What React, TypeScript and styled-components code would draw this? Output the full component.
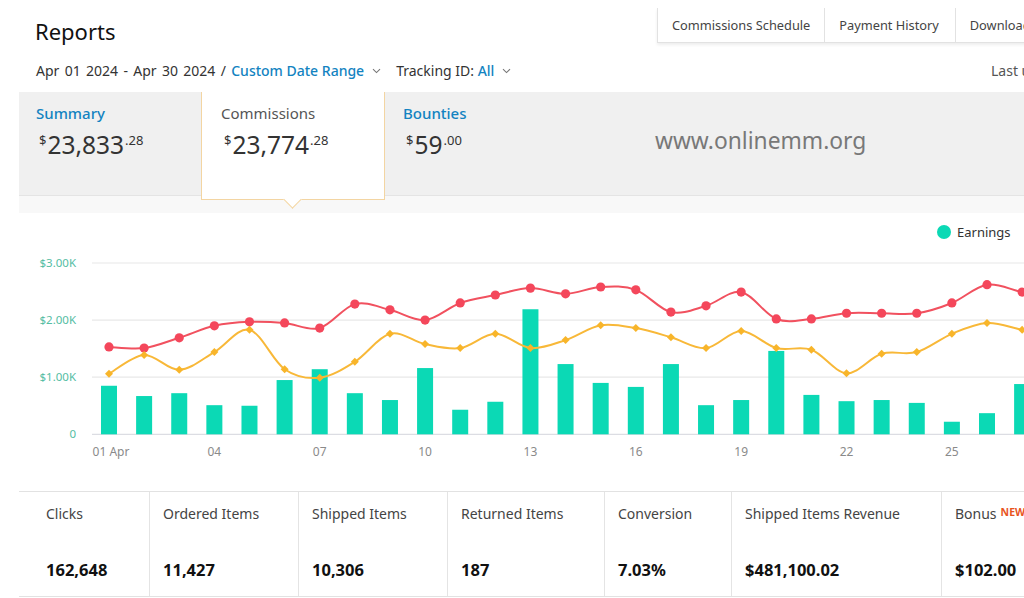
import React from 'react'
import styled, { createGlobalStyle } from 'styled-components'

const GlobalStyle = createGlobalStyle`
  html, body {
    margin: 0;
    padding: 0;
    background: #fff;
    overflow: hidden;
  }
  body {
    width: 1024px;
    height: 598px;
    font-family: 'Noto Sans', 'Open Sans', Arial, sans-serif;
    color: #111;
  }
`

const LINK = '#1383c1'

const Page = styled.div`
  width: 1100px;
  margin-left: 19px;
`

const Header = styled.div`
  display: grid;
  grid-template-columns: 1fr 462px;
  height: 50px;
`

const Title = styled.h1`
  margin: 0;
  padding: 16px 0 0 16px;
  font-size: 22px;
  line-height: 30px;
  font-weight: 400;
  color: #111;
`

const TopTabs = styled.div`
  display: flex;
  margin-top: 8px;
  height: 34px;
  border: 1px solid #e2e2e2;
  border-top: none;
  box-shadow: 0 2px 3px rgba(0, 0, 0, 0.07);
`

const TopTab = styled.div<{ $w: number }>`
  width: ${p => p.$w}px;
  box-sizing: border-box;
  padding: 0 14px;
  display: flex;
  align-items: center;
  font-size: 12.8px;
  color: #444;
  white-space: nowrap;
  & + & {
    border-left: 1px solid #e2e2e2;
  }
`

const DateRow = styled.div`
  display: grid;
  grid-template-columns: 1fr 128px;
  height: 24px;
  margin: 9px 0 9px;
  line-height: 24px;
  font-size: 14px;
`

const DateText = styled.div`
  padding-left: 17px;
  color: #333;
  display: flex;
  align-items: center;
  white-space: nowrap;
`

const Range = styled.span`
  word-spacing: 1.7px;
`

const Link = styled.span`
  color: ${LINK};
  font-weight: 500;
  word-spacing: 0;
`

const Filter = styled.span`
  display: inline-flex;
  align-items: center;
  gap: 8px;
  margin-right: 15px;
`

const Updated = styled.div`
  color: #555;
  white-space: nowrap;
`

const Panel = styled.div`
  position: relative;
  display: flex;
  height: 103px;
  background: #f0f0f0;
  border-bottom: 1px solid #e4e4e4;
`

const Tab = styled.div<{ $w: number; $pad: number }>`
  width: ${p => p.$w}px;
  box-sizing: border-box;
  padding: 11px 0 0 ${p => p.$pad}px;
`

const ActiveTab = styled(Tab)`
  position: relative;
  z-index: 1;
  align-self: flex-start;
  height: 108px;
  background: #fff;
  border: 1px solid #f3d5a2;
  border-top: none;
  &::after {
    content: '';
    position: absolute;
    left: 50%;
    bottom: -7px;
    width: 12px;
    height: 12px;
    margin-left: -7px;
    background: #fff;
    border-right: 1px solid #f3d5a2;
    border-bottom: 1px solid #f3d5a2;
    transform: rotate(45deg);
  }
`

const TabLabel = styled.div<{ $color: string }>`
  font-size: 15px;
  line-height: 20px;
  color: ${p => p.$color};
  font-weight: ${p => (p.$color === LINK ? 500 : 400)};
`

const Amount = styled.div`
  display: inline-flex;
  align-items: flex-start;
  margin-top: 7px;
  padding-left: 3px;
  color: #333;
`

const Small = styled.span`
  font-size: 13px;
  line-height: 20px;
`

const Big = styled.span`
  font-size: 24.5px;
  line-height: 30px;
  margin: 0 1px;
`

const Watermark = styled.div`
  position: absolute;
  left: 636px;
  top: 33px;
  font-size: 22.8px;
  color: #787878;
`

const Strip = styled.div`
  height: 17px;
  background: #f8f8f8;
`

const Legend = styled.div`
  height: 38px;
  display: flex;
  align-items: center;
  gap: 6px;
  padding-left: 918px;
  font-size: 13px;
  color: #333;
`

const LegendDot = styled.span`
  width: 14px;
  height: 14px;
  border-radius: 50%;
  background: #0bd9b5;
`

const ChartSvg = styled.svg`
  display: block;
`

const Stats = styled.div`
  display: grid;
  grid-template-columns: 130px 149px 149px 157px 127px 210px 1fr;
  height: 104px;
  margin-top: 20px;
  border-top: 1px solid #e2e2e2;
  border-bottom: 1px solid #e2e2e2;
`

const Stat = styled.div`
  padding: 12px 10px 0 13px;
  & + & {
    border-left: 1px solid #e4e4e4;
  }
  &:first-child {
    padding-left: 27px;
  }
`

const StatLabel = styled.div`
  font-size: 14px;
  line-height: 20px;
  color: #444;
  white-space: nowrap;
`

const StatValue = styled.div`
  margin-top: 36px;
  font-size: 16.5px;
  line-height: 20px;
  font-weight: 700;
  color: #111;
`

const New = styled.span`
  margin-left: 4px;
  font-size: 10.5px;
  line-height: 10px;
  font-weight: 700;
  color: #e8541e;
  vertical-align: 3px;
`

const Chevron = () => (
  <svg width="9" height="6" viewBox="0 0 9 6">
    <path d="M1 1.2 4.5 4.6 8 1.2" fill="none" stroke="#777" strokeWidth="1.1" />
  </svg>
)

// daily values in $K
const earnings = [
  0.85, 0.67, 0.72, 0.51, 0.5, 0.95, 1.14, 0.72, 0.6, 1.16, 0.43, 0.57, 2.19, 1.23, 0.9,
  0.83, 1.23, 0.51, 0.6, 1.46, 0.69, 0.58, 0.6, 0.55, 0.22, 0.37, 0.88, 0.95, 0.7, 0.8,
]
const revenue = [
  1.53, 1.51, 1.69, 1.9, 1.97, 1.95, 1.86, 2.28, 2.18, 2.0, 2.3, 2.44, 2.56, 2.46, 2.58,
  2.53, 2.14, 2.25, 2.49, 2.02, 2.02, 2.12, 2.12, 2.12, 2.3, 2.62, 2.49, 2.38, 2.45, 2.3,
]
const commissions = [
  1.06, 1.39, 1.13, 1.44, 1.83, 1.14, 0.99, 1.27, 1.76, 1.58, 1.51, 1.76, 1.51, 1.65, 1.91,
  1.86, 1.7, 1.51, 1.81, 1.51, 1.48, 1.07, 1.41, 1.44, 1.76, 1.95, 1.83, 1.7, 1.6, 1.75,
]

const ZERO = 183.3
const PER_K = 57.1
const X0 = 90
const STEP = 35.12
const xAt = (i: number) => X0 + i * STEP
const yAt = (v: number) => ZERO - v * PER_K

const smoothPath = (vals: number[]) => {
  const pts = vals.map((v, i) => [xAt(i), yAt(v)])
  let d = `M${pts[0][0]},${pts[0][1]}`
  for (let i = 0; i < pts.length - 1; i++) {
    const p0 = pts[i - 1] || pts[i]
    const p1 = pts[i]
    const p2 = pts[i + 1]
    const p3 = pts[i + 2] || p2
    const c1x = p1[0] + (p2[0] - p0[0]) / 6
    const c1y = p1[1] + (p2[1] - p0[1]) / 6
    const c2x = p2[0] - (p3[0] - p1[0]) / 6
    const c2y = p2[1] - (p3[1] - p1[1]) / 6
    d += ` C${c1x},${c1y} ${c2x},${c2y} ${p2[0]},${p2[1]}`
  }
  return d
}

const Chart = () => {
  const grid = [3, 2, 1, 0]
  const ticks = [0, 3, 6, 9, 12, 15, 18, 21, 24, 27]
  return (
    <ChartSvg width="1100" height="220" viewBox="0 0 1100 220">
      {grid.map(k => (
        <g key={k}>
          <line
            x1="73"
            x2="1100"
            y1={yAt(k)}
            y2={yAt(k)}
            stroke={k === 0 ? '#dcdde3' : '#e8e8e8'}
            strokeWidth="1.2"
          />
          <text
            x="57"
            y={yAt(k) + 4}
            textAnchor="end"
            fontSize="11.5"
            fill="#55bda3"
            fontFamily="Noto Sans, sans-serif"
          >
            {k === 0 ? '0' : `$${k}.00K`}
          </text>
        </g>
      ))}
      {earnings.map((v, i) => (
        <rect key={i} x={xAt(i) - 8} y={yAt(v)} width="16" height={v * PER_K} fill="#0bd9b5" />
      ))}
      <path d={smoothPath(revenue)} fill="none" stroke="#f1515f" strokeWidth="2" />
      {revenue.map((v, i) => (
        <circle key={i} cx={xAt(i)} cy={yAt(v)} r="4.6" fill="#f4475b" />
      ))}
      <path d={smoothPath(commissions)} fill="none" stroke="#f8b838" strokeWidth="2" />
      {commissions.map((v, i) => {
        const x = xAt(i)
        const y = yAt(v)
        return (
          <path key={i} d={`M${x},${y - 4}L${x + 4},${y}L${x},${y + 4}L${x - 4},${y}Z`} fill="#f8b52a" />
        )
      })}
      {ticks.map(i => (
        <text
          key={i}
          x={i === 0 ? xAt(i) + 2 : xAt(i)}
          y="205"
          textAnchor="middle"
          fontSize="12"
          fill="#8a8a8a"
          fontFamily="Noto Sans, sans-serif"
        >
          {i === 0 ? '01 Apr' : String(i + 1).padStart(2, '0')}
        </text>
      ))}
    </ChartSvg>
  )
}

const Money = ({ whole, cents }: { whole: string; cents: string }) => (
  <Amount>
    <Small>$</Small>
    <Big>{whole}</Big>
    <Small>.{cents}</Small>
  </Amount>
)

const stats = [
  { label: 'Clicks', value: '162,648' },
  { label: 'Ordered Items', value: '11,427' },
  { label: 'Shipped Items', value: '10,306' },
  { label: 'Returned Items', value: '187' },
  { label: 'Conversion', value: '7.03%' },
  { label: 'Shipped Items Revenue', value: '$481,100.02' },
  { label: 'Bonus', value: '$102.00', isNew: true },
]

export default function App() {
  return (
    <>
      <GlobalStyle />
      <Page>
        <Header>
          <Title>Reports</Title>
          <TopTabs>
            <TopTab $w={167}>Commissions Schedule</TopTab>
            <TopTab $w={131}>Payment History</TopTab>
            <TopTab $w={164}>Download Reports</TopTab>
          </TopTabs>
        </Header>

        <DateRow>
          <DateText>
            <Filter>
              <Range>
                Apr 01 2024 - Apr 30 2024 / <Link>Custom Date Range</Link>
              </Range>
              <Chevron />
            </Filter>
            <Filter>
              <span>
                Tracking ID: <Link>All</Link>
              </span>
              <Chevron />
            </Filter>
          </DateText>
          <Updated>Last updated: May 01 2024</Updated>
        </DateRow>

        <Panel>
          <Tab $w={182} $pad={17}>
            <TabLabel $color={LINK}>Summary</TabLabel>
            <Money whole="23,833" cents="28" />
          </Tab>
          <ActiveTab $w={184} $pad={19}>
            <TabLabel $color="#555">Commissions</TabLabel>
            <Money whole="23,774" cents="28" />
          </ActiveTab>
          <Tab $w={182} $pad={18}>
            <TabLabel $color={LINK}>Bounties</TabLabel>
            <Money whole="59" cents="00" />
          </Tab>
          <Watermark>www.onlinemm.org</Watermark>
        </Panel>
        <Strip />

        <Legend>
          <LegendDot />
          Earnings
        </Legend>
        <Chart />

        <Stats>
          {stats.map(s => (
            <Stat key={s.label}>
              <StatLabel>
                {s.label}
                {s.isNew && <New>NEW</New>}
              </StatLabel>
              <StatValue>{s.value}</StatValue>
            </Stat>
          ))}
        </Stats>
      </Page>
    </>
  )
}
